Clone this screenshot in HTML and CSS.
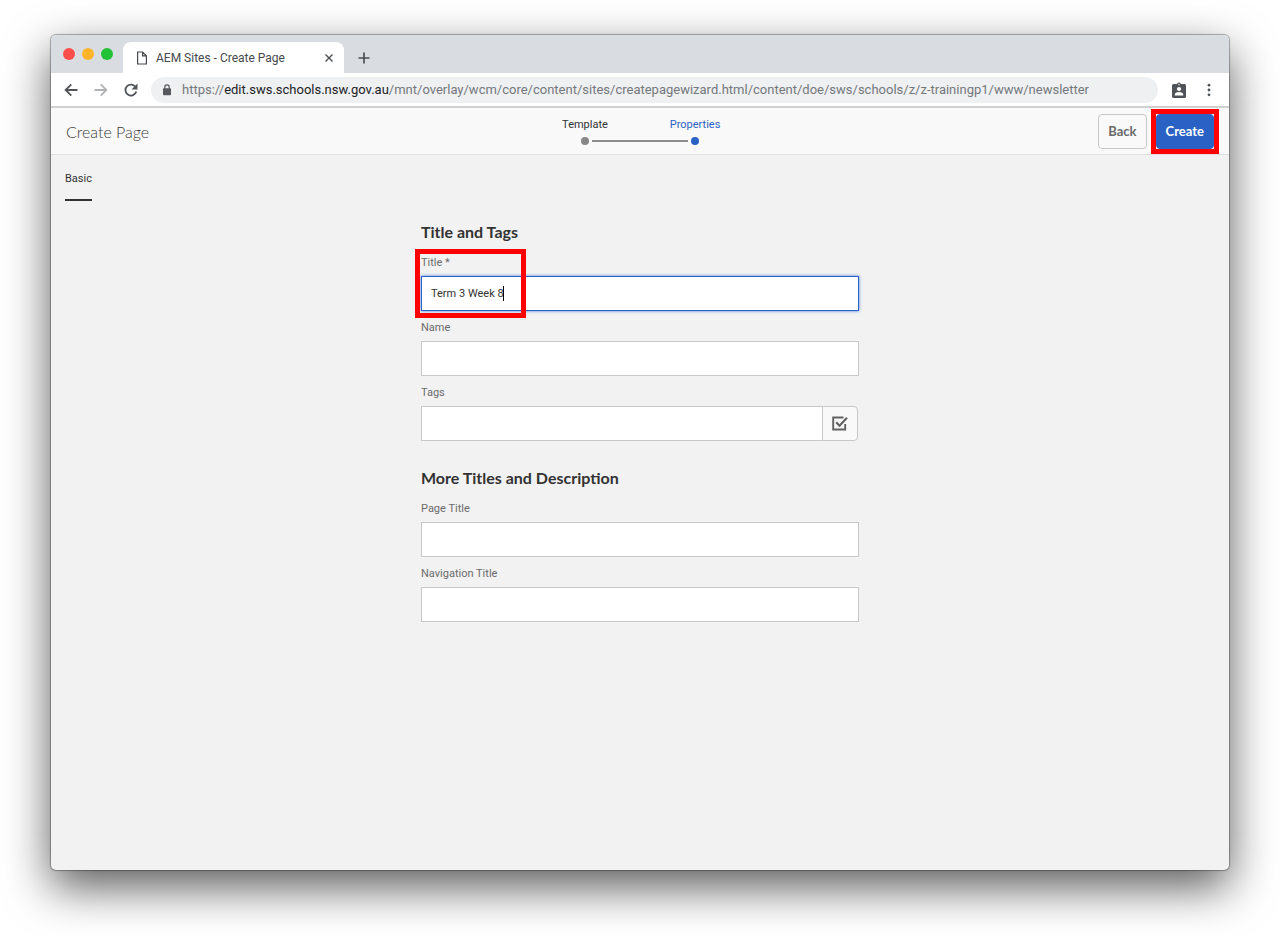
FILE: index.html
```html
<!DOCTYPE html>
<html lang="en">
<head>
<meta charset="utf-8">
<title>AEM Sites - Create Page</title>
<link rel="stylesheet" href="styles.css">
</head>
<body>
<div class="window">
  <div class="tabstrip">
    <div class="lights"><span class="light red"></span><span class="light amber"></span><span class="light green"></span></div>
    <div class="tab">
      <svg class="page-icon" width="12" height="14" viewBox="0 0 12 14" fill="none" stroke="#45494d" stroke-width="1.2"><path d="M1.6 1h5l3.8 3.8V13H1.6zM6.6 1v3.8h3.8"/></svg>
      <span class="tab-title">AEM Sites - Create Page</span>
      <button class="icon-btn" aria-label="Close tab"><svg width="10" height="10" viewBox="0 0 10 10" stroke="#4b4f53" stroke-width="1.4"><path d="M1.500 1.500l7 7M8.500 1.500l-7 7"/></svg></button>
    </div>
    <button class="icon-btn new-tab" aria-label="New tab"><svg width="12" height="12" viewBox="0 0 12 12" stroke="#4b4f53" stroke-width="1.7"><path d="M6 .5v11M.5 6h11"/></svg></button>
  </div>
  <div class="toolbar">
    <button class="icon-btn" aria-label="Back in history"><svg width="14" height="14" viewBox="0 0 14 14" fill="none" stroke="#505458" stroke-width="1.8"><path d="M13.500 7H2M7.300 1.300L1.600 7l5.700 5.700"/></svg></button>
    <button class="icon-btn" aria-label="Forward"><svg width="14" height="14" viewBox="0 0 14 14" fill="none" stroke="#b0b2b4" stroke-width="1.800"><path d="M.5 7H12M6.700 1.300L12.400 7l-5.700 5.700"/></svg></button>
    <button class="icon-btn" aria-label="Reload"><svg width="14" height="14" viewBox="0 0 14 14" fill="none"><path d="M11.700 4.200A5.500 5.500 0 1 0 12.300 8.500" stroke="#505458" stroke-width="1.800"/><path d="M13.500.6v6H7.500z" fill="#505458"/></svg></button>
    <div class="address">
      <svg width="10" height="12" viewBox="0 0 10 12"><rect x="1" y="4.300" width="8" height="6.900" rx="1" fill="#55585c"/><path d="M2.800 5V3a2.200 2.200 0 0 1 4.400 0v2" fill="none" stroke="#55585c" stroke-width="1.200"/></svg>
      <span class="url">https://<span class="host">edit.sws.schools.nsw.gov.au</span>/mnt/overlay/wcm/core/content/sites/createpagewizard.html/content/doe/sws/schools/z/z-trainingp1/www/newsletter</span>
    </div>
    <div class="menus">
      <button class="icon-btn" aria-label="Profile"><svg width="14" height="16" viewBox="0 0 14 16"><path d="M1.500 2h3.600a2 2 0 0 1 3.800 0h3.600A1.500 1.500 0 0 1 14 3.500v11a1.500 1.500 0 0 1-1.500 1.500h-11A1.500 1.500 0 0 1 0 14.500v-11A1.500 1.500 0 0 1 1.500 2z" fill="#505458"/><circle cx="7" cy="2.500" r=".7" fill="#fff"/><circle cx="7" cy="7" r="2.100" fill="#fff"/><path d="M2.800 13.400v-1c0-1.600 2.800-2.300 4.200-2.300s4.200.7 4.200 2.300v1z" fill="#fff"/></svg></button>
      <button class="icon-btn" aria-label="Browser menu"><svg width="4" height="14" viewBox="0 0 4 14" fill="#505458"><circle cx="2" cy="2.200" r="1.400"/><circle cx="2" cy="7" r="1.400"/><circle cx="2" cy="11.800" r="1.400"/></svg></button>
    </div>
  </div>
  <header class="header">
    <h1 class="page-title">Create Page</h1>
    <ol class="steps">
      <li class="step">Template<span class="dot"></span></li>
      <li class="step current">Properties<span class="dot"></span></li>
    </ol>
    <div class="actions">
      <button class="btn">Back</button>
      <span class="marked mark-create"><button class="btn primary">Create</button></span>
    </div>
  </header>
  <main class="content">
    <nav class="tabs"><a class="section-tab" href="#basic">Basic</a></nav>
    <form class="form" id="basic">
      <h2 class="heading">Title and Tags</h2>
      <div class="field marked mark-title">
        <label class="label" for="title">Title *</label>
        <div class="entry">
          <input class="input focused" id="title" type="text" value="Term 3 Week 8">
          <span class="caret"></span>
        </div>
      </div>
      <div class="field">
        <label class="label" for="name">Name</label>
        <input class="input" id="name" type="text">
      </div>
      <div class="field">
        <label class="label" for="tags">Tags</label>
        <div class="picker">
          <input class="input" id="tags" type="text">
          <button class="pick" type="button" aria-label="Select tags"><svg width="16" height="15" viewBox="0 0 16 15" fill="none" stroke="#636363"><path d="M11.500 1.500H1.200v12h12V8" stroke-width="1.900"/><path d="M4.200 6.300l3.300 3.400L15 1.800" stroke-width="2.200"/></svg></button>
        </div>
      </div>
      <h2 class="heading later">More Titles and Description</h2>
      <div class="field">
        <label class="label" for="page-title">Page Title</label>
        <input class="input" id="page-title" type="text">
      </div>
      <div class="field">
        <label class="label" for="nav-title">Navigation Title</label>
        <input class="input" id="nav-title" type="text">
      </div>
    </form>
  </main>
</div>
</body>
</html>
```
FILE: styles.css
```css
*, *::before, *::after { box-sizing: border-box; }
body {
  margin: 0;
  min-height: 100vh;
  padding: 35px 51px 68px;
  display: flex;
  background: #fff;
  font-family: Roboto, "Open Sans", sans-serif;
  font-size: 11px;
  color: #323232;
}
button, input { font: inherit; color: inherit; }
.window {
  flex: 1;
  min-width: 0;
  display: flex;
  flex-direction: column;
  overflow: hidden;
  border-radius: 5px;
  background: #f2f2f2;
  box-shadow: 0 0 1px 1px rgba(0,0,0,.3), 0 17px 46px rgba(0,0,0,.65);
}
.tabstrip {
  display: flex;
  align-items: flex-end;
  height: 38px;
  padding-left: 12px;
  background: #d9dce1;
}
.lights { display: flex; gap: 7px; align-self: center; width: 60px; }
.light { width: 12px; height: 12px; border-radius: 50%; }
.red { background: #fc4f4b; }
.amber { background: #fdb32a; }
.green { background: #22c136; }
.tab {
  display: flex;
  align-items: center;
  width: 221px;
  height: 31px;
  padding: 0 10px 0 13px;
  background: #fff;
  border-radius: 8px 8px 0 0;
}
.tab-title {
  flex: 1;
  padding-left: 8px;
  font-size: 12px;
  color: #45494d;
}
.icon-btn { display: flex; padding: 0; border: 0; background: none; }
.new-tab { padding: 0 14px 9px; }
.toolbar {
  display: flex;
  align-items: center;
  gap: 16px;
  height: 35px;
  padding: 0 18px 0 13px;
  background: #fff;
  border-bottom: 2px solid #d0d0d0;
}
.address {
  flex: 1;
  min-width: 0;
  display: flex;
  align-items: center;
  gap: 10px;
  height: 26px;
  margin: 0 -2px 0 -3px;
  padding: 0 11px;
  border-radius: 13px;
  background: #eff0f2;
}
.url {
  overflow: hidden;
  white-space: nowrap;
  font-size: 13px;
  color: #74787c;
}
.host { color: #202124; }
.menus { display: flex; align-items: center; gap: 21px; }
.header {
  display: grid;
  grid-template-columns: 1fr auto 1fr;
  align-items: center;
  height: 47px;
  padding: 0 15px;
  background: #f9f9f9;
  border-bottom: 1px solid #e0e0e0;
}
.page-title, .heading, .btn { font-family: Lato, "Open Sans", sans-serif; }
.page-title { margin: 0; font-size: 16px; font-weight: 300; color: #3a3a3a; }
.steps { display: flex; margin: 0; padding: 0; list-style: none; }
.step {
  display: flex;
  flex-direction: column;
  align-items: center;
  position: relative;
  width: 110px;
  line-height: 20px;
}
.dot { width: 8px; height: 8px; margin: 2px 0; border-radius: 50%; background: #888; }
.current { color: #2962c4; }
.current .dot { background: #2962c4; }
.current::before {
  content: "";
  position: absolute;
  left: -48px;
  bottom: 5px;
  width: 96px;
  height: 2px;
  background: #8c8c8c;
}
.actions { display: flex; justify-content: flex-end; gap: 9px; }
.btn {
  height: 35px;
  padding: 0 9px;
  border: 1px solid #c8c8c8;
  border-radius: 4px;
  background: #f9f9f9;
  font-size: 13px;
  font-weight: 700;
  color: #696969;
}
.primary { border-color: #2962c4; background: #2962c4; color: #fff; }
.marked { position: relative; }
.marked::after {
  content: "";
  position: absolute;
  border: 5px solid #f00;
  pointer-events: none;
}
.mark-create::after { inset: -5px; }
.mark-title::after { top: -4px; left: -6px; width: 111px; height: 69px; }
.content { flex: 1; padding: 14px; }
.tabs { display: flex; }
.section-tab {
  height: 32px;
  line-height: 20px;
  border-bottom: 2px solid #323232;
  color: #323232;
  text-decoration: none;
}
.form { max-width: 438px; margin: 19px auto 0; }
.heading { margin: 0 0 9px; font-size: 16px; line-height: 24px; font-weight: 700; }
.later { margin-top: 25px; }
.field { display: flex; flex-direction: column; gap: 3px; margin-bottom: 7px; }
.label { line-height: 20px; color: #6b6b6b; }
.entry { position: relative; }
.input {
  display: block;
  width: 100%;
  height: 35px;
  padding: 0 9px;
  border: 1px solid #c8c8c8;
  border-radius: 0;
  background: #fff;
  outline: none;
}
.focused { border-color: #2962c4; box-shadow: 0 0 3px #4b7fdc; }
.caret { position: absolute; left: 82px; top: 10px; width: 1px; height: 15px; background: #000; }
.picker { display: flex; padding-right: 1px; }
.pick {
  display: flex;
  flex: none;
  align-items: center;
  justify-content: center;
  width: 36px;
  margin-left: -1px;
  padding: 0;
  border: 1px solid #c8c8c8;
  border-radius: 0 4px 4px 0;
  background: #f9f9f9;
}
```
